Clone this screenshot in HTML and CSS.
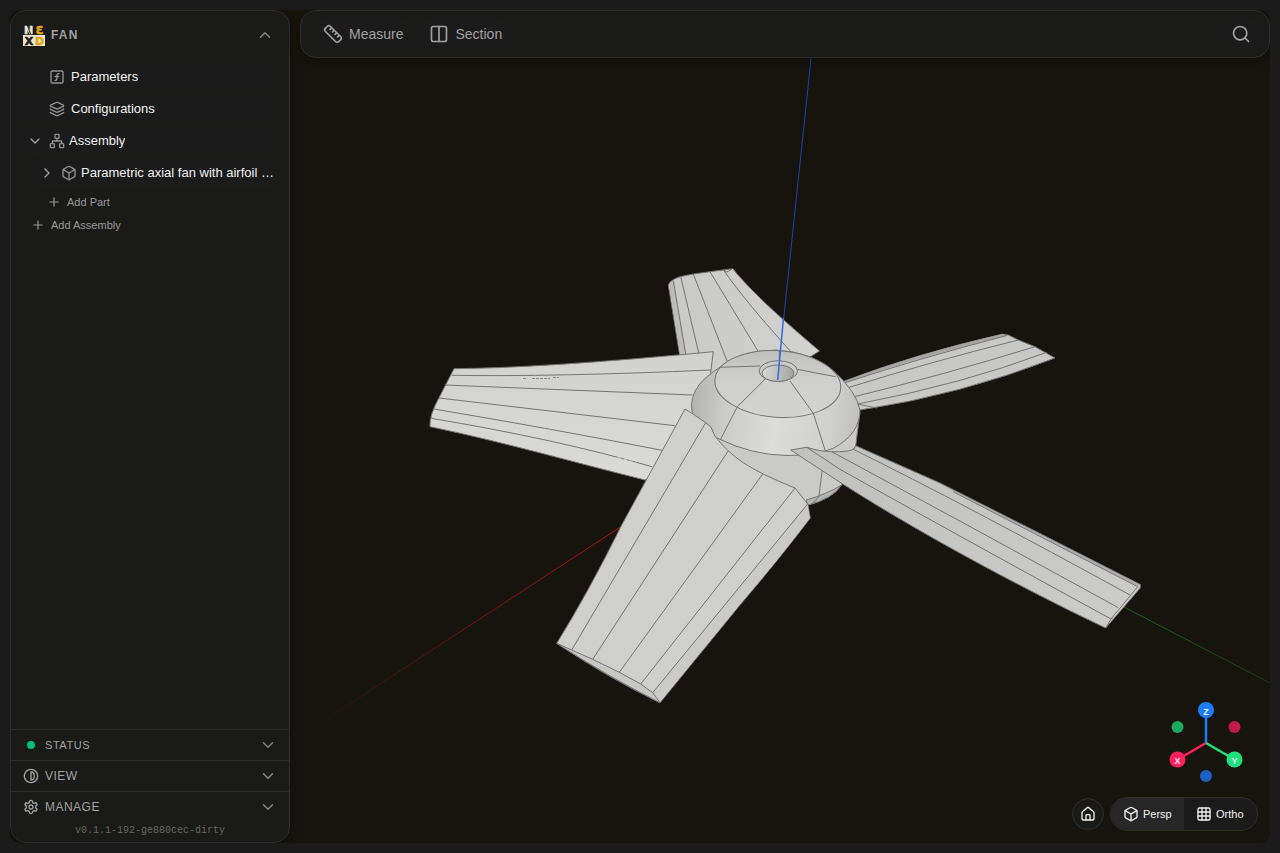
FILE: index.html
```html
<!DOCTYPE html>
<html lang="en">
<head>
<meta charset="utf-8">
<meta name="viewport" content="width=device-width, initial-scale=1">
<title>Fan</title>
<link rel="stylesheet" href="styles.css">
</head>
<body>
<svg class="defs" aria-hidden="true">
  <symbol id="down" viewBox="0 0 24 24"><path d="m6 9 6 6 6-6"/></symbol>
  <symbol id="up" viewBox="0 0 24 24"><path d="m18 15-6-6-6 6"/></symbol>
  <symbol id="right" viewBox="0 0 24 24"><path d="m9 18 6-6-6-6"/></symbol>
  <symbol id="plus" viewBox="0 0 24 24"><path d="M5 12h14M12 5v14"/></symbol>
  <symbol id="box" viewBox="0 0 24 24"><path d="M21 8a2 2 0 0 0-1-1.73l-7-4a2 2 0 0 0-2 0l-7 4A2 2 0 0 0 3 8v8a2 2 0 0 0 1 1.73l7 4a2 2 0 0 0 2 0l7-4A2 2 0 0 0 21 16Z"/><path d="m3.3 7 8.7 5 8.7-5M12 22V12"/></symbol>
</svg>
<div class="app">
  <main class="viewport">
    <svg class="scene" viewBox="10 10 1260 833" preserveAspectRatio="xMidYMid slice" role="img" aria-label="Axial fan model">
      <defs>
        <linearGradient id="red" gradientUnits="userSpaceOnUse" x1="622" y1="526" x2="325" y2="720"><stop stop-color="#b01010"/><stop offset=".5" stop-color="#7a0f0d"/><stop offset="1" stop-color="#1d140e"/></linearGradient>
        <linearGradient id="green" gradientUnits="userSpaceOnUse" x1="1122" y1="606" x2="1270" y2="683"><stop stop-color="#176417"/><stop offset="1" stop-color="#154212"/></linearGradient>
        <linearGradient id="dome" gradientUnits="userSpaceOnUse" x1="691" y1="400" x2="861" y2="420"><stop stop-color="#b2b2b1"/><stop offset=".2" stop-color="#cbcbca"/><stop offset=".5" stop-color="#dcdcda"/><stop offset=".82" stop-color="#d0d0ce"/><stop offset="1" stop-color="#bfbfbe"/></linearGradient>
        <linearGradient id="cap" gradientUnits="userSpaceOnUse" x1="775" y1="350" x2="780" y2="418"><stop stop-color="#bfbfbe"/><stop offset=".4" stop-color="#cececd"/><stop offset="1" stop-color="#d3d3d1"/></linearGradient>
        <linearGradient id="hole" x1="0" x2="1"><stop stop-color="#d8d8d6"/><stop offset="1" stop-color="#a3a3a2"/></linearGradient>
        <linearGradient id="back" x1="0" x2="1"><stop stop-color="#c9c9c8"/><stop offset="1" stop-color="#d2d2d0"/></linearGradient>
        <linearGradient id="arm" gradientUnits="userSpaceOnUse" x1="850" y1="450" x2="1120" y2="610"><stop stop-color="#c2c2c1"/><stop offset="1" stop-color="#cbcbc9"/></linearGradient>
        <linearGradient id="left" x1="0" y1="0" x2="0" y2="1"><stop stop-color="#d1d1cf"/><stop offset="1" stop-color="#dadad8"/></linearGradient>
      </defs>
      <path d="M622 526 325 720" stroke="url(#red)"/>
      <path d="M1122 606 1270 683" stroke="url(#green)"/>
      <path d="M811.500 54 783.500 320" stroke="#1747b8"/>
      <g class="mesh">
        <path fill="url(#back)" d="M679.500 354 668.300 285Q670 280 680 276.700L693.300 274 710 271.700 732.700 268.700C752 292 776 314 819.500 351L810 357 760 380 700 380Z"/>
        <path fill="#bcbcbb" stroke="none" d="M669 285 673.300 281 685.700 354 680 354Z"/>
        <path class="edge" d="M673.300 280.700 685.700 354M680.700 276.700 698.700 353M693.300 274 727 361M710 271.700 758 351M723.500 270Q745 301 792 353M723.500 270 727 272 732 269"/>
        <path fill="url(#left)" d="M454 368.700Q543 368 713.300 351.700L710 378 720 440 645 480C580 464 500 441 430 426.700Q429 416 439 397.700Z"/>
        <path class="edge" d="M451.700 375.300Q553 377 711 370M445.300 385 692.500 395M439 398 675 425.700M434 409Q553 429 662 450.300M431 418.300Q556 439 652 466.700"/>
        <path d="M523 378.500h3m6 0h18m3-1h6" stroke="#8b8b8a" stroke-dasharray="3 1" fill="none"/>
        <path d="M532 424.500l22 4.500M618 457.500l18 5" stroke="#d6d6d4" stroke-dasharray="3 3" fill="none"/>
        <path fill="#c8c8c6" d="M842.700 381.700Q915 354 1002 334.200L1008.300 335 1018.300 340 1035 346.700 1055 358Q960 395 860 410Z"/>
        <path fill="#a5a5a4" stroke="none" d="M843 381.700Q915 354 1002.700 334L1007 335.500Q915 358 844 383Z"/>
        <path class="edge" d="M844 383Q920 358 1007 335.500M848 387.700Q930 362 1018.300 340M854.300 396.700Q943 375 1035 346.700M857.700 404Q963 384 1046.700 352.300M857 404 877 408"/>
        <path fill="#cacac8" d="M700 430 860 412 855.700 446 850 455 841.700 485Q832 499 808 505L740 480Z"/>
        <path fill="#b3b3b2" d="M806 500Q825 495 841.700 485 832 499 808 505Z"/>
        <path class="edge" d="M822 471 819 496.500 812 504"/>
        <path fill="url(#dome)" d="M692.300 413.300Q689 398 699 385 706 376 720.700 366.700 740 351 776 350 812 352 834 371.500 856 391 860 410 860 434 833 448.500 813 455.500 787 455.500 752 455 719.300 439L700 430Z"/>
        <ellipse cx="777.800" cy="384" rx="63" ry="33.300" transform="rotate(4 777.800 384)" fill="url(#cap)"/>
        <path class="edge" d="M719.300 367.300 760 366M797 369.300 835.700 376.700M766 378.300 737.300 406.700 720.700 439M790 381 813.300 413.300 825 450M779.300 351V361"/>
        <ellipse cx="778.300" cy="371" rx="19.200" ry="10.300" fill="#cbcbc9"/>
        <ellipse cx="778" cy="373.200" rx="16" ry="8.300" fill="url(#hole)"/>
        <path fill="url(#arm)" d="M790.700 450 806.700 447.300 816.700 450Q831 453 848 451L854 449 855.700 445.700 940 483 1040 533.500 1140.700 584.700 1140 588.300 1105.700 628C1040 597 930 540 840 482.300Z"/>
        <path fill="#a0a09f" stroke="none" d="M930 478.500 1040 534 1140 585 1137 586Q1040 536.500 953 491Z" opacity=".7"/>
        <path class="edge" d="M852.700 449Q966 505 1130 595M831.700 451.700 973.300 528.300 1118.300 607.700M806.700 447.300 840 469.300Q957 535 1111 619M953 491.700 1137.700 586.700 1111 619 1105.700 628"/>
        <path fill="#cfcfcd" d="M685 409 693 414 705.700 422.700 710.700 426.700 715 436Q727 452 743.300 462.700 760 474 795 488L807.700 504 810.300 518Q780 558 740 605L660 702.700Q610 679 556.700 643.300 588 593 621.700 525Z"/>
        <path fill="#cacac8" stroke="none" d="M807.700 504.500 809.800 518Q780 558 739.700 604.500L660 702 653 692.700Z"/>
        <path fill="#c7c7c5" d="M556.700 643.300 571.700 650 592.700 659.300 619.300 672.300 640.700 684 652.700 692.700 660 702.700Q607 676 556.700 643.300Z"/>
        <path class="edge" d="M705.700 422.700 571.700 650M728.300 450.700 592.700 659.300M762.700 474 619.300 672.300M795 488 640.700 684M807.700 504 652.700 692.700"/>
      </g>
      <path d="M783.500 318 777.700 380" stroke="#2f6ae8" stroke-width="1.500"/>
    </svg>

    <aside class="sidebar">
      <header class="project">
        <svg class="logo" viewBox="0 0 22 22" role="img" aria-label="NEXD">
          <path d="M0 11h22v11H0z" fill="#ece5d0"/>
          <g class="logo-text">
            <text x="5.500" y="9.500" fill="#ece5d0" stroke="#ece5d0">N</text><text x="16.500" y="9.500" fill="#e5a50e" stroke="#e5a50e">Ɛ</text>
            <text x="6" y="20.500" fill="#22211d" stroke="#22211d">X</text><text x="16.500" y="20.500" fill="#e5a50e" stroke="#e5a50e">D</text>
          </g>
          <path d="M4 0 7.500 10" stroke="#1a1a18"/>
        </svg>
        <h1>FAN</h1>
        <button class="collapse" aria-label="Collapse project"><svg class="icon"><use href="#up"/></svg></button>
      </header>
      <nav class="tree" aria-label="Model tree">
        <button class="row leaf"><svg class="icon" viewBox="0 0 24 24"><rect x="3" y="3" width="18" height="18" rx="2"/><path d="M9 17c2 0 2.800-1 2.800-2.800V10c0-2 1-3.300 3.200-3M9 11.200h5.700"/></svg><span>Parameters</span></button>
        <button class="row leaf"><svg class="icon" viewBox="0 0 24 24"><path d="M12.830 2.180a2 2 0 0 0-1.660 0L2.600 6.080a1 1 0 0 0 0 1.830l8.580 3.910a2 2 0 0 0 1.660 0l8.580-3.900a1 1 0 0 0 0-1.830zM2 12a1 1 0 0 0 .6.910l8.600 3.910a2 2 0 0 0 1.650 0l8.580-3.900A1 1 0 0 0 22 12M2 17a1 1 0 0 0 .6.910l8.600 3.910a2 2 0 0 0 1.650 0l8.580-3.900A1 1 0 0 0 22 17"/></svg><span>Configurations</span></button>
        <button class="row" aria-expanded="true"><svg class="icon twist"><use href="#down"/></svg><svg class="icon" viewBox="0 0 24 24"><rect x="16" y="16" width="6" height="6" rx="1"/><rect x="2" y="16" width="6" height="6" rx="1"/><rect x="9" y="2" width="6" height="6" rx="1"/><path d="M5 16v-3a1 1 0 0 1 1-1h12a1 1 0 0 1 1 1v3M12 12V8"/></svg><span>Assembly</span></button>
        <button class="row child" aria-expanded="false"><svg class="icon twist"><use href="#right"/></svg><svg class="icon"><use href="#box"/></svg><span>Parametric axial fan with airfoil …</span></button>
        <div class="adders">
          <button class="add nested"><svg class="icon"><use href="#plus"/></svg>Add Part</button>
          <button class="add"><svg class="icon"><use href="#plus"/></svg>Add Assembly</button>
        </div>
      </nav>
      <button class="section status"><span class="lamp"><i></i></span><span>STATUS</span><svg class="icon"><use href="#down"/></svg></button>
      <button class="section"><svg class="icon lead" viewBox="0 0 24 24"><circle cx="12" cy="12" r="10"/><path d="M12 6v12M12 6c4 0 5 3 5 6s-1 6-5 6"/></svg><span>VIEW</span><svg class="icon"><use href="#down"/></svg></button>
      <button class="section"><svg class="icon lead" viewBox="0 0 24 24"><path d="M12.220 2h-.44a2 2 0 0 0-2 2v.18a2 2 0 0 1-1 1.730l-.43.250a2 2 0 0 1-2 0l-.15-.08a2 2 0 0 0-2.730.730l-.22.380a2 2 0 0 0 .73 2.730l.15.100a2 2 0 0 1 1 1.720v.510a2 2 0 0 1-1 1.740l-.15.090a2 2 0 0 0-.73 2.730l.22.380a2 2 0 0 0 2.730.730l.15-.08a2 2 0 0 1 2 0l.43.250a2 2 0 0 1 1 1.730V20a2 2 0 0 0 2 2h.44a2 2 0 0 0 2-2v-.18a2 2 0 0 1 1-1.730l.43-.25a2 2 0 0 1 2 0l.15.080a2 2 0 0 0 2.730-.73l.22-.39a2 2 0 0 0-.73-2.730l-.15-.08a2 2 0 0 1-1-1.740v-.5a2 2 0 0 1 1-1.740l.15-.09a2 2 0 0 0 .73-2.730l-.22-.38a2 2 0 0 0-2.730-.73l-.15.080a2 2 0 0 1-2 0l-.43-.25a2 2 0 0 1-1-1.730V4a2 2 0 0 0-2-2z"/><circle cx="12" cy="12" r="3"/></svg><span>MANAGE</span><svg class="icon"><use href="#down"/></svg></button>
      <footer class="version">v0.1.1-192-ge880cec-dirty</footer>
    </aside>

    <div class="workspace">
      <header class="toolbar">
        <button class="tool"><svg class="icon" viewBox="0 0 24 24"><path d="M21.300 15.300a2.400 2.400 0 0 1 0 3.400l-2.600 2.600a2.400 2.400 0 0 1-3.400 0L2.700 8.700a2.410 2.410 0 0 1 0-3.400l2.600-2.600a2.410 2.410 0 0 1 3.400 0ZM14.500 12.500l2-2M11.500 9.500l2-2M8.500 6.500l2-2M17.500 15.500l2-2"/></svg>Measure</button>
        <button class="tool"><svg class="icon" viewBox="0 0 24 24"><rect x="3" y="3" width="18" height="18" rx="2"/><path d="M12 3v18"/></svg>Section</button>
        <button class="tool search" aria-label="Search"><svg class="icon" viewBox="0 0 24 24"><circle cx="11" cy="11" r="8"/><path d="m21 21-4.300-4.300"/></svg></button>
      </header>
      <div class="camera">
        <svg class="gizmo" viewBox="0 0 80 84" role="img" aria-label="View orientation">
          <g stroke-width="2.500"><path d="M40 42V9" stroke="#1f7bff"/><path d="M40 42 11.500 58.500" stroke="#ff1f5c"/><path d="M40 42 68.500 58.500" stroke="#1fe07d"/></g>
          <circle cx="40" cy="9" r="8" fill="#1f7bff"/><circle cx="11.500" cy="58.500" r="8" fill="#ff1f5c"/><circle cx="68.500" cy="58.500" r="8" fill="#1fe07d"/>
          <circle cx="11.500" cy="26" r="6" fill="#1da75f"/><circle cx="68.500" cy="26" r="6" fill="#c21b49"/><circle cx="40" cy="75" r="6" fill="#1d61c2"/>
          <text x="40" y="13.500">Z</text><text x="11.500" y="63">X</text><text x="68.500" y="63">Y</text>
        </svg>
        <div class="controls">
          <button class="home" aria-label="Home view"><svg class="icon" viewBox="0 0 24 24"><path d="M15 21v-7a1 1 0 0 0-1-1h-4a1 1 0 0 0-1 1v7M3 10a2 2 0 0 1 .7-1.530l7-6a2 2 0 0 1 2.600 0l7 6A2 2 0 0 1 21 10v9a2 2 0 0 1-2 2H5a2 2 0 0 1-2-2z"/></svg></button>
          <div class="projection">
            <button class="mode active" aria-pressed="true"><svg class="icon"><use href="#box"/></svg>Persp</button>
            <button class="mode" aria-pressed="false"><svg class="icon" viewBox="0 0 24 24"><rect x="3" y="3" width="18" height="18" rx="2"/><path d="M3 9h18M3 15h18M9 3v18M15 3v18"/></svg>Ortho</button>
          </div>
        </div>
      </div>
    </div>
  </main>
</div>
</body>
</html>
```
FILE: styles.css
```css
* { box-sizing: border-box; }
body {
  margin: 0;
  background: #1b1b1b;
  color: #a1a1a1;
  font: 13px/20px "Liberation Sans", Arial, sans-serif;
}
button {
  display: flex;
  align-items: center;
  margin: 0;
  padding: 0;
  border: 0;
  background: none;
  color: inherit;
  font: inherit;
  text-align: left;
}
.defs { display: none; }
.app { display: flex; min-height: 100vh; padding: 10px; }
.viewport {
  flex: 1;
  display: grid;
  grid-template-columns: 280px minmax(0, 1fr);
  column-gap: 10px;
  border-radius: 10px;
  overflow: hidden;
  background: #17140e;
}
.scene {
  grid-area: 1 / 1 / 2 / 3;
  width: 100%;
  height: 100%;
  min-height: 0;
}
.mesh { stroke: #747474; stroke-width: 1; stroke-linejoin: round; }
.mesh .edge { fill: none; }

.icon {
  flex: none;
  width: 16px;
  height: 16px;
  fill: none;
  stroke: currentColor;
  stroke-width: 2;
  stroke-linecap: round;
  stroke-linejoin: round;
}

.sidebar {
  grid-area: 1 / 1;
  z-index: 1;
  display: flex;
  flex-direction: column;
  border: 1px solid #2d2d2c;
  border-radius: 16px;
  background: #1a1a18;
  overflow: hidden;
  box-shadow: 0 4px 12px rgb(0 0 0 / 30%);
}
.project {
  display: flex;
  align-items: center;
  gap: 6px;
  height: 48px;
  padding: 0 15px 0 12px;
}
.logo { width: 22px; height: 22px; }
.logo-text {
  font: bold 11px "DejaVu Sans", sans-serif;
  text-anchor: middle;
  stroke-width: 0.6;
}
h1 {
  margin: 0;
  font-size: 12px;
  letter-spacing: 0.1em;
}
.collapse { margin-left: auto; color: #858585; }
.collapse .icon, .section > .icon:last-child {
  width: 18px;
  height: 18px;
}
.tree {
  flex: 1;
  display: flex;
  flex-direction: column;
  gap: 4px;
  padding: 4px 8px;
}
.row {
  height: 28px;
  padding: 0 6px 0 8px;
  border-radius: 12px;
  background: #1b1b1b;
  gap: 4px;
}
.row .icon { color: #929292; }
.row .icon.twist { margin-right: 2px; color: #a1a1a1; }
.row.leaf { padding-left: 30px; gap: 6px; }
.row.child { margin-left: 12px; }
.row span {
  min-width: 0;
  overflow: hidden;
  color: #f2f2f2;
  text-overflow: ellipsis;
  white-space: nowrap;
}
.adders { display: flex; flex-direction: column; }
.add {
  height: 23px;
  padding: 0 0 2px 12px;
  gap: 6px;
  color: #989898;
  font-size: 11px;
}
.add.nested { padding-left: 28px; }
.add .icon { width: 14px; height: 14px; }

.section {
  height: 31px;
  padding: 0 12px;
  border-top: 1px solid #2d2d2c;
  gap: 6px;
  font-size: 12px;
  letter-spacing: 0.04em;
}
.section.status { font-size: 11px; letter-spacing: 0.05em; }
.section > .icon:last-child { margin-left: auto; color: #858585; }
.lamp { display: grid; place-items: center; width: 16px; }
.lamp i { width: 8px; height: 8px; border-radius: 50%; background: #00bc7d; }
.version {
  height: 20px;
  color: #666;
  font: 10px/18px "Liberation Mono", monospace;
  text-align: center;
}

.workspace {
  grid-area: 1 / 2;
  z-index: 1;
  display: flex;
  flex-direction: column;
  justify-content: space-between;
}
.toolbar {
  display: flex;
  align-items: center;
  gap: 10px;
  height: 48px;
  padding: 0 10px 0 14px;
  border: 1px solid #2d2d2c;
  border-radius: 16px;
  background: #1a1a18;
  box-shadow: 0 4px 12px rgb(0 0 0 / 30%);
}
.tool {
  height: 32px;
  padding: 0 8px;
  border-radius: 12px;
  background: #1b1b1b;
  gap: 6px;
  font-size: 14px;
}
.tool .icon { width: 20px; height: 20px; }
.tool.search { margin-left: auto; }

.camera {
  display: flex;
  flex-direction: column;
  align-items: flex-end;
  gap: 12px;
  padding: 12px;
}
.gizmo { width: 80px; height: 84px; }
.camera .gizmo { margin-right: 12px; }
.gizmo text {
  fill: #e6eef5;
  font: bold 9px "Liberation Sans", Arial, sans-serif;
  text-anchor: middle;
}
.controls { display: flex; align-items: center; gap: 6px; color: #f2f2f2; }
.home {
  justify-content: center;
  width: 32px;
  height: 32px;
  border: 1px solid #2d2d2c;
  border-radius: 50%;
  background: #1a1a18;
}
.projection {
  display: flex;
  height: 34px;
  border: 1px solid #2d2d2c;
  border-radius: 17px;
  overflow: hidden;
  background: #1b1b1b;
}
.mode { min-width: 73px; padding: 0 12px; gap: 4px; font-size: 11px; }
.mode.active { background: #272727; }
```
